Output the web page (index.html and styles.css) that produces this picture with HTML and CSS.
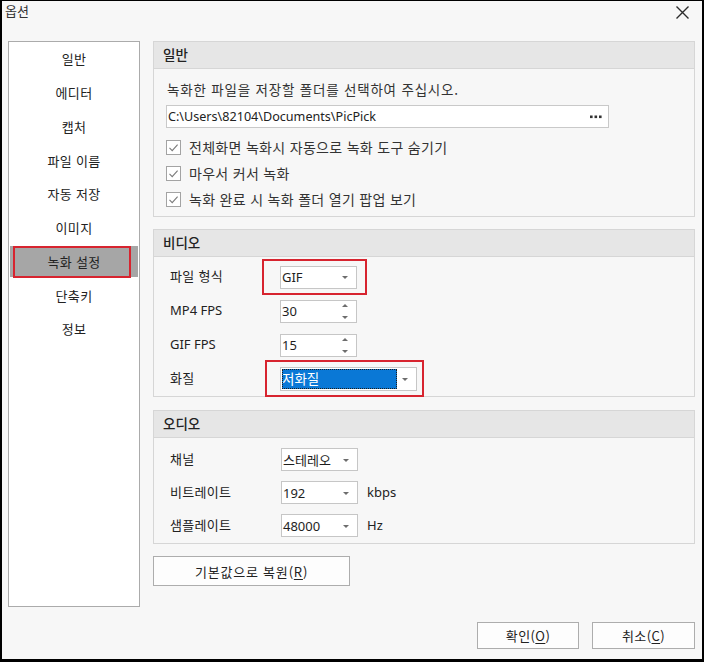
FILE: index.html
```html
<!DOCTYPE html>
<html lang="ko">
<head>
<meta charset="utf-8">
<title>옵션</title>
<link rel="stylesheet" href="styles.css">
</head>
<body>
<div class="window">
  <div class="titlebar">
    <span class="title">옵션</span>
    <svg class="close" width="13" height="13" viewBox="0 0 13 13"><path d="M0.5 0.5 L12.5 12.5 M12.5 0.5 L0.5 12.5" stroke="#2b2b2b" stroke-width="1.4" fill="none"/></svg>
  </div>
  <div class="main">
    <nav class="nav">
      <div class="nav-item">일반</div>
      <div class="nav-item">에디터</div>
      <div class="nav-item">캡처</div>
      <div class="nav-item">파일 이름</div>
      <div class="nav-item">자동 저장</div>
      <div class="nav-item">이미지</div>
      <div class="nav-item active">녹화 설정</div>
      <div class="nav-item">단축키</div>
      <div class="nav-item">정보</div>
    </nav>
    <div class="content">
      <section class="group g-general">
        <div class="group-head">일반</div>
        <div class="group-body">
          <p class="desc">녹화한 파일을 저장할 폴더를 선택하여 주십시오.</p>
          <div class="path-field">
            <span class="path-text">C:\Users\82104\Documents\PicPick</span>
            <svg class="dots" width="12" height="4" viewBox="0 0 12 4"><rect x="0" y="0.5" width="2.6" height="2.6" fill="#333"/><rect x="4.5" y="0.5" width="2.6" height="2.6" fill="#333"/><rect x="9" y="0.5" width="2.6" height="2.6" fill="#333"/></svg>
          </div>
          <div class="checks">
            <div class="check"><span class="box"><svg width="13" height="13" viewBox="0 0 13 13"><path d="M2.5 6.8 L5.2 9.6 L10.6 3.6" stroke="#7a7a7a" stroke-width="1.1" fill="none"/></svg></span><span class="check-text">전체화면 녹화시 자동으로 녹화 도구 숨기기</span></div>
            <div class="check"><span class="box"><svg width="13" height="13" viewBox="0 0 13 13"><path d="M2.5 6.8 L5.2 9.6 L10.6 3.6" stroke="#7a7a7a" stroke-width="1.1" fill="none"/></svg></span><span class="check-text">마우서 커서 녹화</span></div>
            <div class="check"><span class="box"><svg width="13" height="13" viewBox="0 0 13 13"><path d="M2.5 6.8 L5.2 9.6 L10.6 3.6" stroke="#7a7a7a" stroke-width="1.1" fill="none"/></svg></span><span class="check-text">녹화 완료 시 녹화 폴더 열기 팝업 보기</span></div>
          </div>
        </div>
      </section>

      <section class="group g-video">
        <div class="group-head">비디오</div>
        <div class="group-body rows rows-video">
          <div class="label">파일 형식</div>
          <div class="cell">
            <div class="combo w77 marked mark-a"><span class="val">GIF</span><span class="arrow"></span></div>
          </div>
          <div class="label latin">MP4 FPS</div>
          <div class="cell">
            <div class="spin w77"><span class="val">30</span><span class="spin-arrows"><span class="up"></span><span class="down"></span></span></div>
          </div>
          <div class="label latin">GIF FPS</div>
          <div class="cell">
            <div class="spin w77"><span class="val">15</span><span class="spin-arrows"><span class="up"></span><span class="down"></span></span></div>
          </div>
          <div class="label">화질</div>
          <div class="cell">
            <div class="combo w137 quality marked mark-b"><span class="sel">저화질</span><span class="arrow"></span></div>
          </div>
        </div>
      </section>

      <section class="group g-audio">
        <div class="group-head">오디오</div>
        <div class="group-body rows rows-audio">
          <div class="label">채널</div>
          <div class="cell shift">
            <div class="combo w77"><span class="val">스테레오</span><span class="arrow"></span></div>
          </div>
          <div class="label">비트레이트</div>
          <div class="cell shift">
            <div class="combo w77"><span class="val">192</span><span class="arrow"></span></div>
            <span class="unit">kbps</span>
          </div>
          <div class="label">샘플레이트</div>
          <div class="cell shift">
            <div class="combo w77"><span class="val">48000</span><span class="arrow"></span></div>
            <span class="unit">Hz</span>
          </div>
        </div>
      </section>

      <div class="reset-row">
        <button class="btn reset">기본값으로 복원(<u>R</u>)</button>
      </div>
    </div>
  </div>
  <div class="footer">
    <button class="btn ok">확인(<u>O</u>)</button>
    <button class="btn cancel">취소(<u>C</u>)</button>
  </div>
</div>
</body>
</html>
```

FILE: styles.css
```css
* { box-sizing: border-box; }

html, body {
  margin: 0;
  padding: 0;
  background: #000;
}

body {
  font-family: "Noto Sans", "Noto Sans CJK KR", sans-serif;
  font-size: 13px;
  color: #1e1e1e;
}

.window {
  width: 704px;
  height: 662px;
  border-style: solid;
  border-color: #000;
  border-width: 1px 2px 3px 2px;
  background: #f7f7f7;
  display: flex;
  flex-direction: column;
}

.titlebar {
  height: 40px;
  display: flex;
  justify-content: space-between;
  align-items: flex-start;
  padding: 0 13px 0 3px;
}

.title {
  font-family: "Noto Sans CJK KR", sans-serif;
  font-size: 13px;
  line-height: 20px;
  color: #333;
}

.close {
  margin-top: 5px;
}

.main {
  height: 566px;
  display: flex;
  gap: 13px;
  padding: 0 7px 0 6px;
}

/* ---------- left navigation ---------- */
.nav {
  width: 132px;
  flex: none;
  background: #fff;
  border: 1px solid #ababab;
  padding: 0 1px;
}

.nav-item {
  height: 33.75px;
  display: flex;
  align-items: center;
  justify-content: center;
  font-family: "Noto Sans CJK KR", sans-serif;
  font-size: 13px;
  letter-spacing: 0.3px;
  color: #222;
  position: relative;
}

.nav-item.active {
  background: #a6a6a6;
  height: 31.5px;
  margin: 1px 0 1.25px;
}

.nav-item.active::after {
  content: "";
  position: absolute;
  left: 3px;
  right: 7px;
  top: 0;
  bottom: -0.5px;
  border: 2px solid #d7242f;
}

/* ---------- right content ---------- */
.content {
  width: 542px;
  display: flex;
  flex-direction: column;
}

.group {
  border: 1px solid #d6d6d6;
  background: #f7f7f7;
}

.g-video { margin-top: 12px; }
.g-audio { margin-top: 13px; }

.group-head {
  height: 27px;
  line-height: 24px;
  padding-left: 9px;
  background: #e6e6e6;
  border-bottom: 1px solid #d6d6d6;
  font-family: "Noto Sans CJK KR", sans-serif;
  font-size: 13.5px;
  font-weight: 500;
  color: #222;
}

/* general group */
.g-general .group-body {
  padding: 9px 0 4px 12px;
}

.desc {
  margin: 0;
  height: 22px;
  line-height: 22px;
  padding-left: 1px;
  font-family: "Noto Sans CJK KR", sans-serif;
  font-size: 13.5px;
  letter-spacing: 0.8px;
  color: #333;
}

.path-field {
  margin-top: 5px;
  width: 443px;
  height: 23px;
  background: #fff;
  border: 1px solid #c9c9c9;
  display: flex;
  align-items: center;
  justify-content: space-between;
  padding: 0 6px 0 1px;
  font-size: 12.6px;
  color: #222;
}

.path-text {
  line-height: 20px;
}

.dots { display: block; }

.checks {
  margin-top: 6px;
}

.check {
  height: 26px;
  display: flex;
  align-items: center;
  gap: 8px;
}

.box {
  width: 15px;
  height: 15px;
  flex: none;
  border: 1px solid #a3a3a3;
  background: #fff;
  display: flex;
  align-items: center;
  justify-content: center;
}

.box svg { display: block; }

.check-text {
  font-family: "Noto Sans CJK KR", sans-serif;
  font-size: 14px;
  letter-spacing: 0.3px;
  color: #333;
}

/* rows with label + control */
.rows {
  display: grid;
  grid-template-columns: 110px 1fr;
  padding-left: 16px;
}

.rows-video {
  padding-top: 3px;
  grid-auto-rows: 34px;
}

.rows-audio {
  padding-top: 5px;
  padding-bottom: 1px;
  grid-auto-rows: 33px;
}

.label {
  display: flex;
  align-items: center;
  font-family: "Noto Sans CJK KR", sans-serif;
  font-size: 13px;
  letter-spacing: 0.3px;
  color: #222;
  line-height: 18px;
  padding-bottom: 2px;
}

.label.latin {
  font-family: "Noto Sans", sans-serif;
  letter-spacing: 0;
}

.cell {
  display: flex;
  align-items: center;
  gap: 9px;
}

.cell.shift { padding-left: 1px; }

.combo, .spin {
  height: 23px;
  background: #fff;
  border: 1px solid #c6c6c6;
  display: flex;
  align-items: center;
  justify-content: space-between;
  padding: 0 8px 0 1px;
  position: relative;
  font-size: 13px;
  color: #1e1e1e;
}

.w77 { width: 77px; }
.w137 { width: 137px; height: 24px; }

.val {
  line-height: 18px;
  font-family: "Noto Sans", "Noto Sans CJK KR", sans-serif;
}

.arrow {
  width: 0;
  height: 0;
  border-left: 3.5px solid transparent;
  border-right: 3.5px solid transparent;
  border-top: 3.5px solid #6d6d6d;
  margin-top: 1px;
}

.spin-arrows {
  display: flex;
  flex-direction: column;
  justify-content: space-between;
  height: 15px;
}

.spin-arrows .up {
  width: 0;
  height: 0;
  border-left: 3px solid transparent;
  border-right: 3px solid transparent;
  border-bottom: 3px solid #6d6d6d;
}

.spin-arrows .down {
  width: 0;
  height: 0;
  border-left: 3px solid transparent;
  border-right: 3px solid transparent;
  border-top: 3px solid #6d6d6d;
}

.quality {
  padding-left: 1px;
  padding-right: 8px;
}

.sel {
  width: 115px;
  height: 20px;
  background: #0a78d6;
  color: #fff;
  font-family: "Noto Sans CJK KR", sans-serif;
  font-size: 13.5px;
  line-height: 18px;
  outline: 1px dotted #1d1d1d;
  outline-offset: -1px;
  padding-left: 0;
}

/* red annotation boxes */
.marked::after {
  content: "";
  position: absolute;
  border: 2px solid #d7242f;
}

.mark-a::after {
  left: -19px;
  right: -11px;
  top: -8px;
  bottom: -7px;
}

.mark-b::after {
  left: -16px;
  right: -8px;
  top: -8px;
  bottom: -7px;
}

.unit {
  font-size: 13px;
  color: #222;
  line-height: 18px;
  padding-bottom: 2px;
}

/* buttons */
.btn {
  font-family: "Noto Sans CJK KR", sans-serif;
  font-size: 13px;
  letter-spacing: 0.4px;
  color: #222;
  background: #fdfdfd;
  border: 1px solid #adadad;
  border-radius: 0;
  padding: 0;
  margin: 0;
}

.btn u {
  text-underline-offset: 2px;
}

.reset-row {
  margin-top: 12px;
  display: flex;
}

.reset {
  width: 197px;
  height: 30px;
  letter-spacing: 0.8px;
}

.footer {
  margin-top: 15px;
  display: flex;
  justify-content: flex-end;
  gap: 13px;
  padding-right: 7px;
}

.ok {
  width: 102px;
  height: 27px;
}

.cancel {
  width: 103px;
  height: 27px;
}
```
